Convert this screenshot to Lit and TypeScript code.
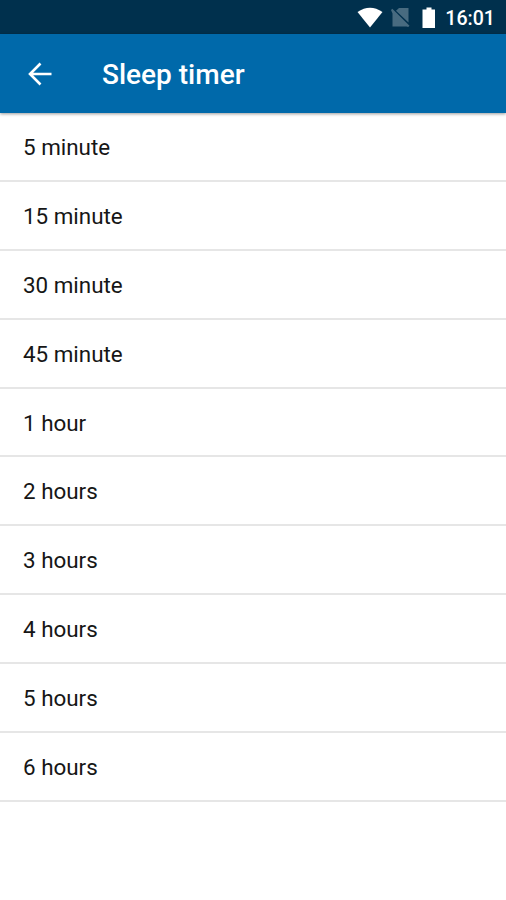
import { LitElement, html, css } from "lit";
import { customElement } from "lit/decorators.js";

const DURATIONS = ["5 minute", "15 minute", "30 minute", "45 minute", "1 hour", "2 hours", "3 hours", "4 hours", "5 hours", "6 hours"];

@customElement("app-root")
export class AppRoot extends LitElement {
  static styles = css`
    :host { display: block; height: 900px; background: #fff; font-family: Roboto, sans-serif; overflow: hidden; }
    .status { box-sizing: border-box; height: 34px; background: #00304d; color: #fff; display: flex; align-items: center; justify-content: flex-end; padding: 2px 11px 0 0; }
    .icons { display: block; width: 82px; height: 24px; margin-right: 7px; }
    .clock { font-size: 19.6px; line-height: 24px; font-weight: 500; padding-top: 2px; }
    .bar { position: relative; box-sizing: border-box; height: 79px; background: #0069aa; color: #fff; display: flex; align-items: center; padding-left: 28px; box-shadow: 0 1px 3px rgba(0,0,0,.4); }
    .back { display: block; width: 24px; height: 24px; margin-right: 50px; }
    .title { margin: 0; font-size: 28px; line-height: 32px; font-weight: 500; padding-top: 2px; }
    .list { list-style: none; margin: 0; padding: 0; }
    .row { box-sizing: border-box; height: 68.9px; border-bottom: 2px solid #e6e6e6; display: flex; align-items: center; padding: 1.2px 23px 0; font-size: 22.4px; line-height: 28px; color: #161616; }
  `;

  render() {
    return html`
      <div class="status">
        <svg class="icons" viewBox="356 6 82 24">
          <path fill="#fff" d="M357.5 12Q370 3.5 382.5 12L370 27.5Z" />
          <path fill="#486b80" d="M399 8H408.5V22.5L396 10.8ZM391 10L392.3 8.8L409.5 25.7L408.2 27L406.5 26.5H392.5V13.5Z" />
          <path fill="#fff" d="M426.5 7.5H431.5V9.5H435V28H422.5V9.5H426.5Z" />
        </svg>
        <span class="clock">16:01</span>
      </div>
      <header class="bar">
        <svg class="back" viewBox="0 0 24 24" fill="none" stroke="#fff" stroke-width="2.6"><path d="M23.5 12H3M12.5 1.5L2 12L12.5 22.5" /></svg>
        <h1 class="title">Sleep timer</h1>
      </header>
      <ul class="list">${DURATIONS.map((d) => html`<li class="row">${d}</li>`)}</ul>
    `;
  }
}
